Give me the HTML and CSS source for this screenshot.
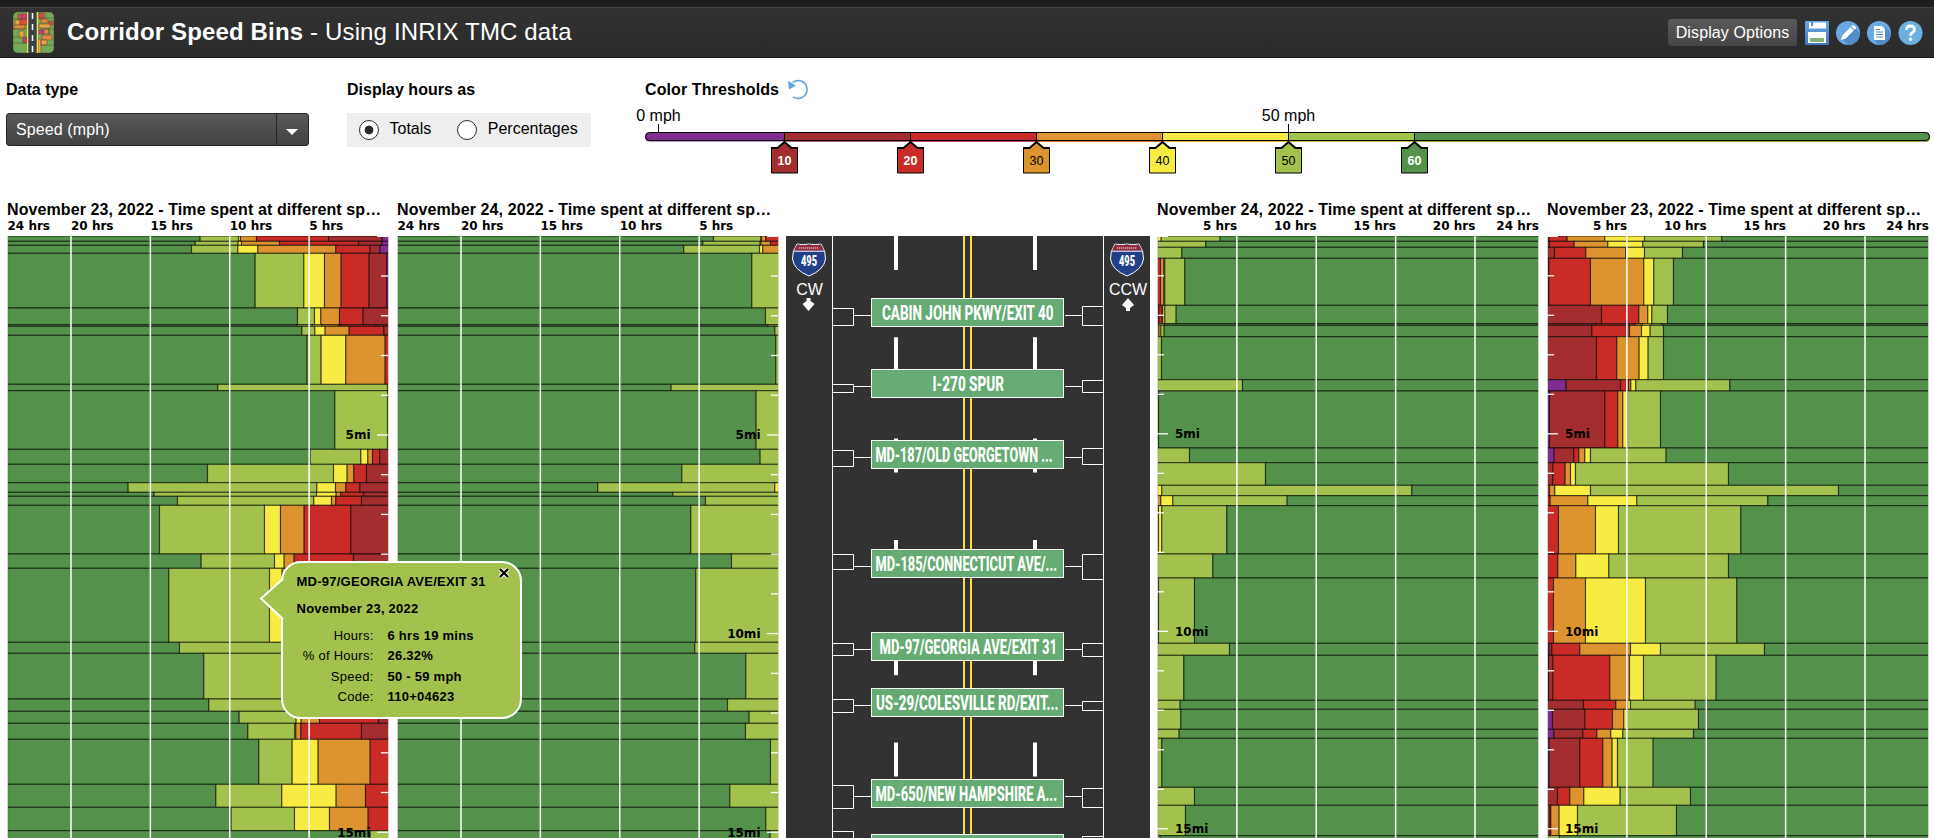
FILE: index.html
```html
<!DOCTYPE html>
<html lang="en">
<head>
<meta charset="utf-8">
<title>Corridor Speed Bins</title>
<link rel="stylesheet" href="styles.css">
</head>
<body>
<header class="header">
  <svg class="logo" width="41" height="41" viewBox="0 0 41 41">
    <defs><clipPath id="logo-clip"><rect width="41" height="41" rx="5"/></clipPath></defs>
    <g clip-path="url(#logo-clip)" stroke="#6b4a35" stroke-width=".6">
      <rect width="41" height="41" fill="#72ab58"/>
      <path fill="#e9a743" d="M2 8h5v5H2zM6 19h5v7H6z"/>
      <path fill="#dd4b3d" d="M5 2h4v5H5zM7 7h7v6H7zM26 1h5v6h-5zM36 9h4v4h-4z"/>
      <path fill="#d8338b" d="M9 2h5v5H9zM10 26h4v5h-4zM26 18h5v4h-5z"/>
      <path fill="#de8a40" d="M1 13h11v4H1zM28 7h7v4h-7zM31 17h5v5h-5zM29 23h10v5H29z"/>
      <path fill="#e9a743" d="M26 12h11v4H26zM28 28h6v5h-6zM25 27h3v14h-3z"/>
      <path fill="none" d="M0 7h14M0 17h14M0 25h14M0 31h14M27 6h14M27 17h14M27 33h14M33 1v5M36 17v6"/>
    </g>
    <path fill="#f3dc53" d="M14 0h1.4v41H14zM23.600 0H25v41h-1.400z"/>
    <path fill="#3b4148" d="M15.400 0h8.200v41h-8.200z"/>
    <path stroke="#fff" stroke-width="1.500" stroke-dasharray="6 5" d="M19.500 1v40"/>
  </svg>
  <h1 class="title"><b>Corridor Speed Bins</b> - Using INRIX TMC data</h1>
  <div class="tools">
    <button class="options">Display Options</button>
    <svg width="24" height="24" viewBox="0 0 24 24">
      <defs><linearGradient id="blue" x2="0" y2="1"><stop stop-color="#67a9e3"/><stop offset="1" stop-color="#4378c0"/></linearGradient></defs>
      <rect width="24" height="24" rx="1" fill="url(#blue)"/>
      <path fill="#fff" d="M4 1.500h17v6H4zM3 11h18v11H3z"/>
      <path fill="#4e87cc" d="M6 1h2v4H6z"/><path fill="#7fb36f" d="M5 17h14v4H5z"/>
    </svg>
    <svg width="24" height="24" viewBox="0 0 24 24">
      <circle cx="12" cy="12" r="12" fill="#6aa9e2"/><path d="M6 18l6 6a12 12 0 0 0 12-12l-6-6z" fill="#558bca"/>
      <path fill="#fff" d="M5 19l1.500-4.800 8-8 3.300 3.300-8 8zM15.400 5.400l1-1q.8-.6 1.600 0l1.700 1.700q.6.800 0 1.600l-1 1z"/>
    </svg>
    <svg width="24" height="24" viewBox="0 0 24 24">
      <circle cx="12" cy="12" r="12" fill="#6aa9e2"/><path d="M7 19l5 5a12 12 0 0 0 12-12l-6-6z" fill="#558bca"/>
      <path fill="#fff" d="M7 5h8l3 3v11H7z"/><path stroke="#558bca" d="M9 8.500h4M9 11h7M9 13.500h7M9 16h7"/>
    </svg>
    <svg class="help" width="25" height="24" viewBox="0 0 25 24">
      <circle cx="12.500" cy="12" r="12" fill="#6db0e0"/>
      <path d="M8.500 9q0-4 4-4t4 3.500q0 2-2.200 3.200-1.800 1-1.800 3" fill="none" stroke="#fff" stroke-width="2.800"/><circle cx="12.500" cy="18.200" r="1.700" fill="#fff"/>
    </svg>
  </div>
</header>

<section class="controls">
  <div class="field data-type">
    <h2>Data type</h2>
    <div class="select"><span>Speed (mph)</span><i><svg width="12" height="6"><path fill="#fff" d="M0 0h12L6 6z"/></svg></i></div>
  </div>
  <div class="field hours-as">
    <h2>Display hours as</h2>
    <div class="radios">
      <label><span class="radio on"></span>Totals</label>
      <label><span class="radio"></span>Percentages</label>
    </div>
  </div>
  <div class="field thresholds">
    <h2>Color Thresholds
      <svg width="22" height="22" viewBox="0 0 22 22" fill="none" stroke="#5fa3e6" stroke-width="1.600"><path d="M5.500 4.500A9 9 0 1 1 6 18.800"/><path d="M1 3l1 8.500 7-4z" fill="#5fa3e6" stroke="none"/></svg>
    </h2>
    <svg class="scale" id="scale" width="1298" height="70"></svg>
  </div>
</section>

<main class="charts">
  <section class="chart"><h2>November 23, 2022 - Time spent at different sp…</h2><svg data-chart="cw23" width="382" height="622"></svg></section>
  <section class="chart"><h2>November 24, 2022 - Time spent at different sp…</h2><svg data-chart="cw24" width="382" height="622"></svg></section>
  <svg class="road" id="road" width="364" height="602"></svg>
  <section class="chart"><h2>November 24, 2022 - Time spent at different sp…</h2><svg data-chart="ccw24" width="382" height="622"></svg></section>
  <section class="chart"><h2>November 23, 2022 - Time spent at different sp…</h2><svg data-chart="ccw23" width="382" height="622"></svg></section>
</main>

<aside class="popup">
  <svg class="pointer" width="25" height="42" viewBox="0 0 25 42"><path d="M24 1L2 20.500 24 41" fill="#a2c24d" stroke="#fff" stroke-width="2"/></svg>
  <svg class="close" width="12" height="12" viewBox="0 0 12 12"><path d="M2 2l8 8M10 2l-8 8" stroke="#fff" stroke-width="4"/><path d="M2 2l8 8M10 2l-8 8" stroke="#000" stroke-width="2.200"/></svg>
  <h3>MD-97/GEORGIA AVE/EXIT 31</h3>
  <h3>November 23, 2022</h3>
  <dl>
    <dt>Hours:</dt><dd>6 hrs 19 mins</dd>
    <dt>% of Hours:</dt><dd>26.32%</dd>
    <dt>Speed:</dt><dd>50 - 59 mph</dd>
    <dt>Code:</dt><dd>110+04623</dd>
  </dl>
</aside>
<script src="charts.js"></script>
</body>
</html>
```
FILE: styles.css
```css
* { box-sizing: border-box; }
body {
  margin: 0;
  height: 838px;
  overflow: hidden;
  background: #fff;
  color: #000;
  font: 16px/20px "Liberation Sans", Arial, sans-serif;
}
h1, h2, h3, dl, dd { margin: 0; }
h2 { font-size: 16px; line-height: 20px; font-weight: bold; }
svg { display: block; flex: none; }

.header {
  display: flex;
  align-items: center;
  height: 58px;
  padding: 8px 11px 1px 13px;
  background: linear-gradient(#1e1e1e 7px, #454545 7px, #454545 8px, #323232 8px, #2a2a2a 57px, #191617 57px);
  color: #fff;
}
.title { margin: -2px 0 0 13px; font-size: 24px; font-weight: normal; line-height: 28px; letter-spacing: .15px; }
.tools { display: flex; align-items: center; gap: 7px; margin-left: auto; }
.options {
  width: 129px;
  height: 27px;
  margin-right: 1px;
  padding: 0;
  border: 0;
  border-radius: 3px;
  background: linear-gradient(#5a5a5a, #454545);
  color: #fff;
  font: 16px/26px "Liberation Sans", Arial, sans-serif;
  letter-spacing: .1px;
}

.controls { display: flex; height: 136px; padding: 21px 0 0 6px; }
.field { flex: none; }
.field h2 { height: 34px; padding-top: 1px; display: flex; line-height: 20px; }
.data-type { width: 341px; }
.select {
  display: flex;
  width: 303px;
  height: 33px;
  border: 1px solid #252525;
  border-radius: 3px;
  background: linear-gradient(#595959, #424242);
  color: #fff;
  line-height: 31px;
}
.select span { flex: 1; padding-left: 9px; letter-spacing: .1px; }
.select i { width: 32px; border-left: 1px solid #252525; padding: 15px 0 0 9px; }
.hours-as { width: 289px; }
.radios { display: flex; width: 244px; height: 34px; background: #eee; padding-left: 12px; gap: 26px; }
.radios label { display: flex; align-items: center; gap: 10.500px; line-height: 30px; padding-bottom: 2px; }
.radio { width: 20px; height: 20px; border: 1px solid #2b2b2b; border-radius: 50%; background: #fff; margin-top: 2px; }
.radio.on { background: radial-gradient(circle, #2b2b2b 4px, #fff 4.800px); }
.thresholds { width: 1298px; }
.thresholds h2 { padding-left: 9px; height: 25px; gap: 8px; letter-spacing: .1px; }
.thresholds h2 svg { margin-top: -2px; }

.charts { display: flex; height: 644px; padding: 6px 0 0 7px; gap: 8px; align-items: flex-start; }
.chart { width: 382px; }
.chart h2 { white-space: nowrap; margin-bottom: -4px; letter-spacing: .1px; }
.chart svg text { font: bold 12px "DejaVu Sans", Verdana, sans-serif; }
.road { width: 364px; margin: 36px -1px 0; }
.road .sign { font: 800 20.500px Roboto, sans-serif; fill: #fff; }
.road .direction { font: 16px "Liberation Sans", Arial, sans-serif; fill: #fff; text-anchor: middle; }
.road .route { font: 900 15px Roboto, sans-serif; fill: #fff; }

.scale text { font: 16px "Liberation Sans", Arial, sans-serif; text-anchor: middle; }
.scale { overflow: visible; }
.scale .value { font-size: 12.500px; }
.scale .light { fill: #fff; font-weight: bold; }

.popup {
  position: absolute;
  left: 281px;
  top: 561px;
  width: 241px;
  height: 158px;
  border: 2px solid #fff;
  border-radius: 20px;
  background: #a2c24d;
  padding: 10px 0 0 13.500px;
  font-size: 13px;
  letter-spacing: .25px;
}
.popup h3 { font-size: 13px; line-height: 17px; margin-bottom: 10px; }
.popup dl { display: grid; grid-template-columns: 77px auto; column-gap: 14px; line-height: 20.400px; margin-top: -1px; }
.popup dt { text-align: right; }
.popup dd { font-weight: bold; }
.pointer { position: absolute; left: -24px; top: 15px; }
.close { position: absolute; right: 10px; top: 4px; }
```
FILE: charts.js
```javascript
const COLORS = ['#7f2e90', '#a32d2f', '#c92c27', '#de942e', '#f8ec44', '#a2c24d', '#54914a'];
const WIDTH = 381;
const TOP = 20;
const UNIT = 1 / 3;      // data coordinates are thirds of a pixel
const X0 = 22, X1 = 1166, Y0 = 138;

// Row boundaries down each side of the corridor.
const CW_ROWS = [138, 154, 166, 190, 354, 404, 409, 436, 583, 602, 778, 823, 878, 907, 919, 946, 1092, 1135, 1357, 1390, 1527, 1564, 1600, 1648, 1783, 1852, 1922, 1980];
const CCW_ROWS = [138, 154, 172, 205, 346, 401, 406, 440, 569, 603, 774, 818, 886, 917, 947, 1092, 1164, 1360, 1396, 1531, 1558, 1618, 1645, 1792, 1846, 1937, 1980];

// CW rows list where each bin starts, fastest first; CCW rows where each bin ends, slowest first.
const DATA = {
  cw23: [
    [600,715,721,769,985,1146],[585,714,724,838,1075,1145],[574,713,773,1007,1110,1139],[765,911,973,1023,1107,1160],
    [892,943,962,1018,1089],[890,937,965,1017,1127],[905,944,975,1047,1151],[921,963,1037,1155],[653,1162],[1004,1162],
    [930,1082,1103,1117,1139],[622,1000,1041,1061,1099],[384,950,1006,1037,1079],[462,949,1008,1022,1090],
    [532,941,994,1007,1084],[478,793,841,912,1052],[603,823,852,882,1060],[506,808,846],[538,900],[611,900],[626,900],
    [717,888,903,958,1135],[743,884,887,902,1084],[776,876,954,1110],[647,845,1008,1096],[693,883,988,1104],[1110]
  ],
  cw24: [
    [970,1112,1114,1127],[938,1110,1112,1141],[881,1108,1118],[1085],[1126],[1133],[1154],[1157],[843],[1098],[1110],[875],
    [623,1154],[848],[946],[902],[1024],[917],[914],[1067],[1012],[1077],[1066],[1141],[1019],[1127],[1140]
  ],
  ccw24: [
    [22,22,22,22,33,210],[22,22,22,22,22,167],[22,22,22,22,22,95],[22,22,31,41,44,104],[22,26,36,38,44,78],[22,22,22,22,22,44],
    [22,22,22,27,32,42],[22,22,22,22,22,34],[22,22,22,22,22,277],[22,22,22,22,22,25],[22,22,22,22,22,118],[22,22,22,22,22,346],
    [22,22,22,22,35,785],[22,22,22,32,68,411],[22,22,22,25,35,230],[22,22,22,22,22,188],[22,22,22,22,25,133],[22,22,22,22,22,238],
    [22,22,22,22,22,101],[22,22,22,22,22,90],[22,22,22,22,22,92],[22,22,22,22,22,87],[22,22,22,22,22,35],[22,22,22,22,22,133],
    [22,22,22,22,22,106],[22,22,22,22,22,30]
  ],
  ccw23: [
    [22,27,81,194,313,545],[22,28,102,203,308,490],[22,43,137,257,313,427],[22,26,151,311,341,400],[22,184,296,323,335,382],
    [22,167,285,307,335,365],[22,155,268,304,330,370],[22,169,230,297,324,370],[78,241,266,272,287,569],[28,194,233,248,262,361],
    [42,101,116,134,151,378],[22,38,75,91,106,565],[22,22,28,44,151,895],[22,22,30,143,290,683],[22,22,55,166,235,602],
    [22,22,53,107,206,565],[22,22,40,136,316,590],[27,35,119,271,361,673],[25,38,209,268,310,528],[22,130,227,262,271,465],
    [37,134,217,251,260,475],[41,128,170,212,248,460],[27,119,188,216,232,339],[22,52,89,131,240,451],[22,30,32,57,112,409],
    [22,22,22,22,22,58]
  ]
};

const line = (x1, y1, x2, y2, attrs) => `<line x1="${x1}" y1="${y1}" x2="${x2}" y2="${y2}" ${attrs}/>`;

function drawChart(svg) {
  const name = svg.dataset.chart;
  const cw = name.startsWith('cw');
  const rows = cw ? CW_ROWS : CCW_ROWS;
  const px = v => (v - X0) * UNIT + 0.5;
  const py = v => (v - Y0) * UNIT + TOP;
  let out = `<defs><clipPath id="clip-${name}"><rect y="${TOP}" width="382" height="620"/></clipPath></defs><g clip-path="url(#clip-${name})" stroke="#000" stroke-opacity=".6" stroke-width="1.15">`;
  DATA[name].forEach((bounds, i) => {
    const edges = [X0, ...bounds, X1];
    for (let k = 0; k < edges.length - 1; k++) {
      const w = (edges[k + 1] - edges[k]) * UNIT;
      if (w <= 0) continue;
      const color = COLORS[cw ? 6 - k : k];
      out += `<rect x="${px(edges[k])}" y="${py(rows[i])}" width="${w}" height="${(rows[i + 1] - rows[i]) * UNIT}" fill="${color}"/>`;
    }
  });
  out += '</g>';

  for (const h of [0, 5, 10, 15, 20, 24]) {
    const x = 0.5 + (cw ? 24 - h : h) * WIDTH / 24;
    const edge = h === 0 || h === 24;
    out += line(x, TOP, x, 640, `stroke="#fff" stroke-width="${edge ? 1 : 1.5}" stroke-opacity="${edge ? 0.75 : 1}"`);
    if (h) out += `<text x="${cw ? x : x + 0.3}" y="14" text-anchor="${cw ? 'start' : 'end'}">${h} hrs</text>`;
  }
  for (let mile = 0; mile <= 15; mile++) {
    const y = TOP + 0.3 + mile * (cw ? 39.73 : 39.5);
    const len = mile % 5 ? 7 : 11;
    const tick = 'stroke="#fff" stroke-width="1.3"';
    out += cw ? line(381 - len, y, 381, y, tick) : line(0, y, len, y, tick);
    if (mile && mile % 5 === 0) out += `<text x="${cw ? 363.5 : 18}" y="${y + 4.4}" text-anchor="${cw ? 'end' : 'start'}">${mile}mi</text>`;
  }
  svg.innerHTML = out;
}

// name, sign top, text left, text right, left bracket, right bracket
const SIGNS = [
  ['CABIN JOHN PKWY/EXIT 40', 62, 96, 267.5, 72.5, 89.5, 70.5, 89.5],
  ['I-270 SPUR', 133, 146.5, 218, 148.5, 156.5, 144.5, 156.5],
  ['MD-187/OLD GEORGETOWN ...', 204, 89.5, 266.5, 214.5, 230.5, 212.5, 228.5],
  ['MD-185/CONNECTICUT AVE/...', 313, 89.5, 271, 318.5, 333.5, 318.5, 343.5],
  ['MD-97/GEORGIA AVE/EXIT 31', 396, 93.5, 271, 407.5, 419.5, 407.5, 420.5],
  ['US-29/COLESVILLE RD/EXIT...', 452, 90, 272.5, 463.5, 476.5, 465.5, 474.5],
  ['MD-650/NEW HAMPSHIRE A...', 543, 89.5, 271, 549.5, 572.5, 552.5, 571.5],
  ['', 598, 0, 0, 595.5, 620, 600.5, 620]
];

function shield(x) {
  return `<g transform="translate(${x} 7)"><path d="M5 1q6 1.500 12 0 6 1.500 12 0 5 7 4.500 15Q32 27 17 33 2 27 .5 16 0 8 5 1z" fill="#233f87" stroke="#fff"/>
    <path d="M5.200 1.600q6 1.400 11.800 0 6 1.400 11.800 0 2 3 3 6.200H2.200q1-3.200 3-6.200z" fill="#912b3a"/><path d="M2 8.200h30" stroke="#fff"/><path d="M7 5h20" stroke="#d9a9ae" stroke-width="1.500" stroke-dasharray="1.300 .7"/>
    <text class="route" x="9" y="23" textLength="16" lengthAdjust="spacingAndGlyphs">495</text></g>`;
}

function drawRoad(svg) {
  let out = '<rect width="364" height="602" fill="#323232"/>';
  out += '<path stroke="#fff" d="M46.500 0v602M317.500 0v602"/><path stroke="#fedf3a" stroke-width="2" d="M178 0v602M185 0v602"/>';
  for (let i = 0; i < 6; i++) out += `<path stroke="#fff" stroke-width="4" d="M110 ${i * 101.3}v34M249 ${i * 101.3}v34"/>`;
  for (const [name, y, x1, x2, l1, l2, r1, r2] of SIGNS) {
    out += `<path fill="none" stroke="#fff" d="M46.500 ${l1}h21V${l2}h-21M67.500 ${y + 17.5}H85M317.500 ${r1}h-21V${r2}h21M296.500 ${y + 17.5}H279"/>`;
    out += `<rect x="85.500" y="${y + 0.5}" width="192" height="28" fill="#66ab73" stroke="#fff"/>`;
    if (name) out += `<text class="sign" x="${x1}" y="${y + 22.3}" textLength="${x2 - x1}" lengthAdjust="spacingAndGlyphs">${name}</text>`;
  }
  out += shield(6) + shield(324);
  out += '<text class="direction" x="23.500" y="59">CW</text><text class="direction" x="342" y="59">CCW</text>';
  out += '<path fill="#fff" d="M20.500 62h4v3l4 3-6 7-6-7 4-3zM340 75h4v-3l4-3-6-7-6 7 4 3z"/>';
  svg.innerHTML = out;
}

function drawScale(svg) {
  const step = 125.95, zero = 22.8;
  let out = '<defs><clipPath id="bar"><rect x="9" y="28.500" width="1285" height="9" rx="4.500"/></clipPath></defs><g clip-path="url(#bar)">';
  COLORS.forEach((c, i) => {
    const x = i ? Math.round(zero + i * step) : 9;
    out += `<rect x="${x}" y="28" width="1300" height="10" fill="${c}"/>`;
    if (i) out += line(x - 0.5, 28, x - 0.5, 38, 'stroke="#000"');
  });
  out += '</g><rect x="9.500" y="28.500" width="1284" height="8" rx="4" fill="none" stroke="#000"/>';
  for (const n of [0, 50]) {
    const x = Math.round(zero + n / 10 * step) - 0.5;
    out += line(x, 20, x, 28, 'stroke="#000"') + `<text x="${x}" y="17">${n} mph</text>`;
  }
  for (let i = 1; i < 7; i++) {
    const x = Math.round(zero + i * step) - 0.5;
    out += `<path d="M${x - 13} 44h6l7-6 7 6h6v25h-26z" fill="${COLORS[i]}" stroke="#000"/><path stroke="#000" stroke-width="2" fill="none" d="M${x - 13.5} 44h6.500l7-6 7 6h6.500"/>`;
    out += `<text class="value ${[1, 2, 6].includes(i) ? 'light' : ''}" x="${x}" y="61">${i}0</text>`;
  }
  svg.innerHTML = out;
}

document.querySelectorAll('[data-chart]').forEach(drawChart);
drawRoad(document.getElementById('road'));
drawScale(document.getElementById('scale'));
```
